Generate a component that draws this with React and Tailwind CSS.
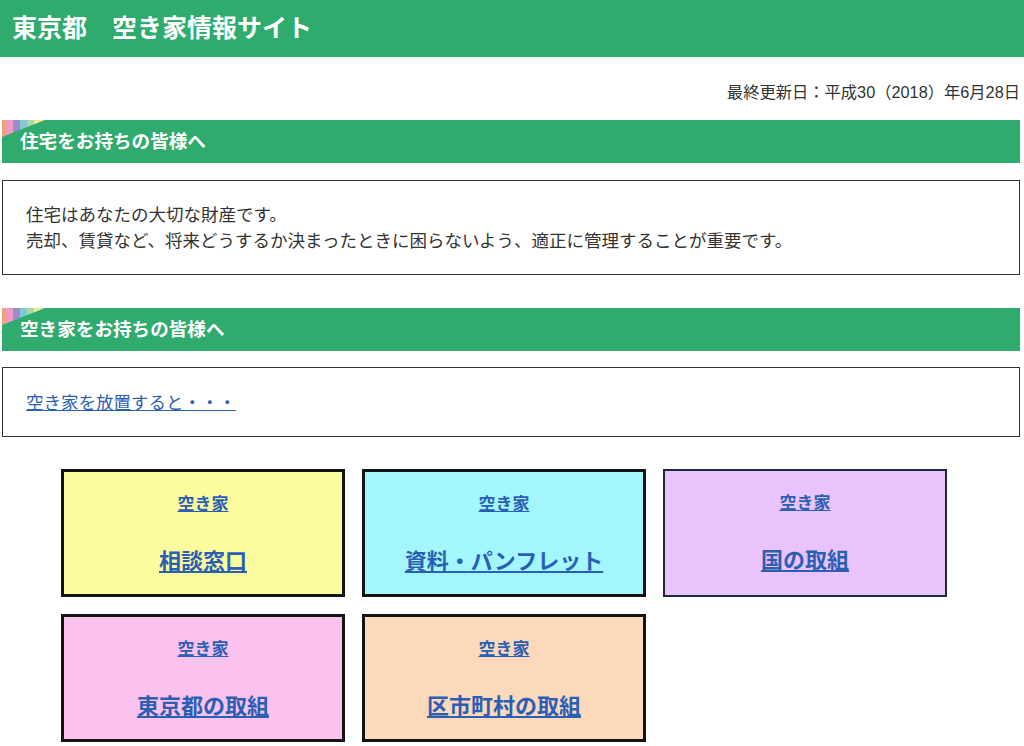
// 東京都 空き家情報サイト — top page

const GREEN = 'bg-[#2eab6d]';

const cards = [
  { title: '相談窓口', bg: 'bg-[#fcfc9f]', border: 'border-[3px] border-[#141414]' },
  { title: '資料・パンフレット', bg: 'bg-[#a4f6fd]', border: 'border-[3px] border-[#141414]' },
  { title: '国の取組', bg: 'bg-[#e9c3fb]', border: 'border-2 border-[#1e2a3a]' },
  { title: '東京都の取組', bg: 'bg-[#fbc2ee]', border: 'border-[3px] border-[#141414]' },
  { title: '区市町村の取組', bg: 'bg-[#fdd9bb]', border: 'border-[3px] border-[#141414]' },
];

function Stripes() {
  return (
    <svg className="absolute left-0 top-0" width="44" height="18" viewBox="0 0 44 18">
      <defs>
        <clipPath id="tri">
          <polygon points="0,0 43,0 0,17" />
        </clipPath>
      </defs>
      <g clipPath="url(#tri)">
        <rect x="0" y="0" width="4" height="18" fill="#f2a27a" />
        <rect x="4" y="0" width="7" height="18" fill="#ef9cc3" />
        <rect x="11" y="0" width="7" height="18" fill="#9d8ccb" />
        <rect x="18" y="0" width="7" height="18" fill="#82c9d3" />
        <rect x="25" y="0" width="7" height="18" fill="#a9d9a3" />
        <rect x="32" y="0" width="12" height="18" fill="#f1ea94" />
      </g>
    </svg>
  );
}

function SectionHeading({ children }) {
  return (
    <h2 className={`relative h-[43px] ${GREEN} flex items-center pl-[18px] text-[18.6px] font-bold text-white`}>
      <Stripes />
      {children}
    </h2>
  );
}

function LinkCard({ title, bg, border }) {
  return (
    <a href="#" className={`h-[128px] ${bg} ${border} flex flex-col items-center text-[#2b5fb4] font-bold underline`}>
      <span className="mt-[20px] text-[17px] leading-[26px]">空き家</span>
      <span className="mt-[28px] text-[22px] leading-[32px]">{title}</span>
    </a>
  );
}

export default function App() {
  return (
    <div className="min-h-[746px] bg-white text-[#333] font-['Liberation_Sans','Noto_Sans_CJK_JP',sans-serif]">
      {/* Header */}
      <header className={`h-[57px] ${GREEN} flex items-center pl-[12px]`}>
        <h1 className="text-[25px] font-bold text-white">東京都　空き家情報サイト</h1>
      </header>

      <div className="ml-[2px] mr-[4px]">
        <p className="mt-[23px] text-right text-[16.3px] leading-[24px] text-[#333]">
          最終更新日：平成30（2018）年6月28日
        </p>

        <div className="mt-[16px]">
          <SectionHeading>住宅をお持ちの皆様へ</SectionHeading>
          <div className="mt-[17px] border border-[#333] pt-[21px] pb-[20px] pl-[23px] text-[17.5px] leading-[26px]">
            <p>住宅はあなたの大切な財産です。</p>
            <p>売却、賃貸など、将来どうするか決まったときに困らないよう、適正に管理することが重要です。</p>
          </div>
        </div>

        <div className="mt-[33px]">
          <SectionHeading>空き家をお持ちの皆様へ</SectionHeading>
          <div className="mt-[16px] border border-[#333] pt-[22px] pb-[20px] pl-[23px] text-[17.5px] leading-[26px]">
            <a href="#" className="text-[#2b5fb4] underline">空き家を放置すると・・・</a>
          </div>
        </div>
      </div>

      {/* Link cards */}
      <div className="mt-[32px] pl-[61px] grid grid-cols-[284px_284px_284px] gap-x-[17px] gap-y-[17px]">
        {cards.map((c) => (
          <LinkCard key={c.title} {...c} />
        ))}
      </div>
    </div>
  );
}
